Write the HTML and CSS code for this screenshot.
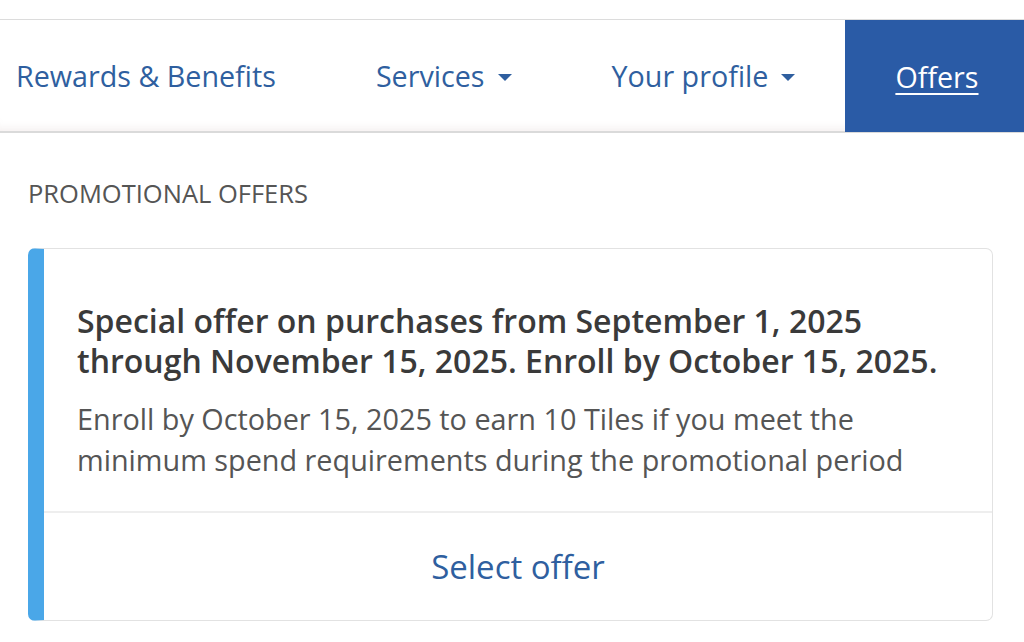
FILE: index.html
```html
<!DOCTYPE html>
<html lang="en">
<head>
<meta charset="utf-8">
<title>Promotional offers</title>
<link rel="stylesheet" href="styles.css">
</head>
<body>
<div class="topspace"></div>
<nav class="nav">
  <a class="nav-item first" href="#">Rewards &amp; Benefits</a>
  <a class="nav-item" href="#">Services<span class="caret"></span></a>
  <a class="nav-item" href="#">Your profile<span class="caret"></span></a>
  <a class="nav-item active" href="#"><span class="u">Offers</span></a>
</nav>
<main class="content">
  <h2 class="label">PROMOTIONAL OFFERS</h2>
  <section class="card">
    <div class="card-body">
      <h3 class="card-title">Special offer on purchases from September 1, 2025 through November 15, 2025. Enroll by October 15, 2025.</h3>
      <p class="card-text">Enroll by October 15, 2025 to earn 10 Tiles if you meet the minimum spend requirements during the promotional period</p>
    </div>
    <div class="card-footer">
      <a class="select" href="#">Select offer</a>
    </div>
  </section>
</main>
</body>
</html>
```
FILE: styles.css
```css
* { box-sizing: border-box; }
html, body { margin: 0; padding: 0; background: #fff; }
body {
  font-family: "Open Sans", "Noto Sans", sans-serif;
  width: 1024px;
  height: 642px;
  overflow: hidden;
}
.topspace { height: 19px; }
.nav {
  display: flex;
  height: 114px;
  border-top: 1px solid #dcdcdc;
  border-bottom: 2px solid #dadada;
  box-shadow: inset 0 -10px 10px -8px rgba(235,225,225,0.6);
}
.nav-item {
  display: flex;
  align-items: center;
  padding: 0 50px;
  font-size: 28.7px;
  color: #2f5f9f;
  text-decoration: none;
  white-space: nowrap;
}
.nav-item.first { padding-left: 16px; }
.caret {
  display: inline-block;
  width: 0; height: 0;
  margin-left: 13px;
  margin-top: 3px;
  border-left: 7px solid transparent;
  border-right: 7px solid transparent;
  border-top: 7px solid #2f5f9f;
}
.nav-item.active {
  flex: 1;
  background: #2a5ba6;
  color: #fff;
  margin-bottom: -1px;
}
.u { text-decoration: underline; text-underline-offset: 5px; text-decoration-thickness: 2px; }
.content { padding: 0 31px 0 28px; }
.label {
  margin: 44px 0 0;
  font-size: 25.5px;
  font-weight: 400;
  color: #555;
  line-height: 32px;
}
.card {
  margin-top: 39px;
  border: 1px solid #e2e2e2;
  border-left: 16px solid #4aa7e8;
  border-radius: 7px;
  height: 373px;
  display: flex;
  flex-direction: column;
}
.card-body {
  padding: 52px 30px 0 33px;
  height: 264px;
  border-bottom: 2px solid #eeeeee;
}
.card-title {
  margin: 0;
  font-size: 32px;
  font-weight: 600;
  line-height: 40px;
  color: #3a3a3a;
}
.card-text {
  margin: 17px 0 0;
  font-size: 28.8px;
  line-height: 41px;
  color: #555;
}
.card-footer {
  flex: 1;
  display: flex;
  align-items: center;
  justify-content: center;
}
.select {
  font-size: 33px;
  color: #2f5f9f;
  text-decoration: none;
}
```
